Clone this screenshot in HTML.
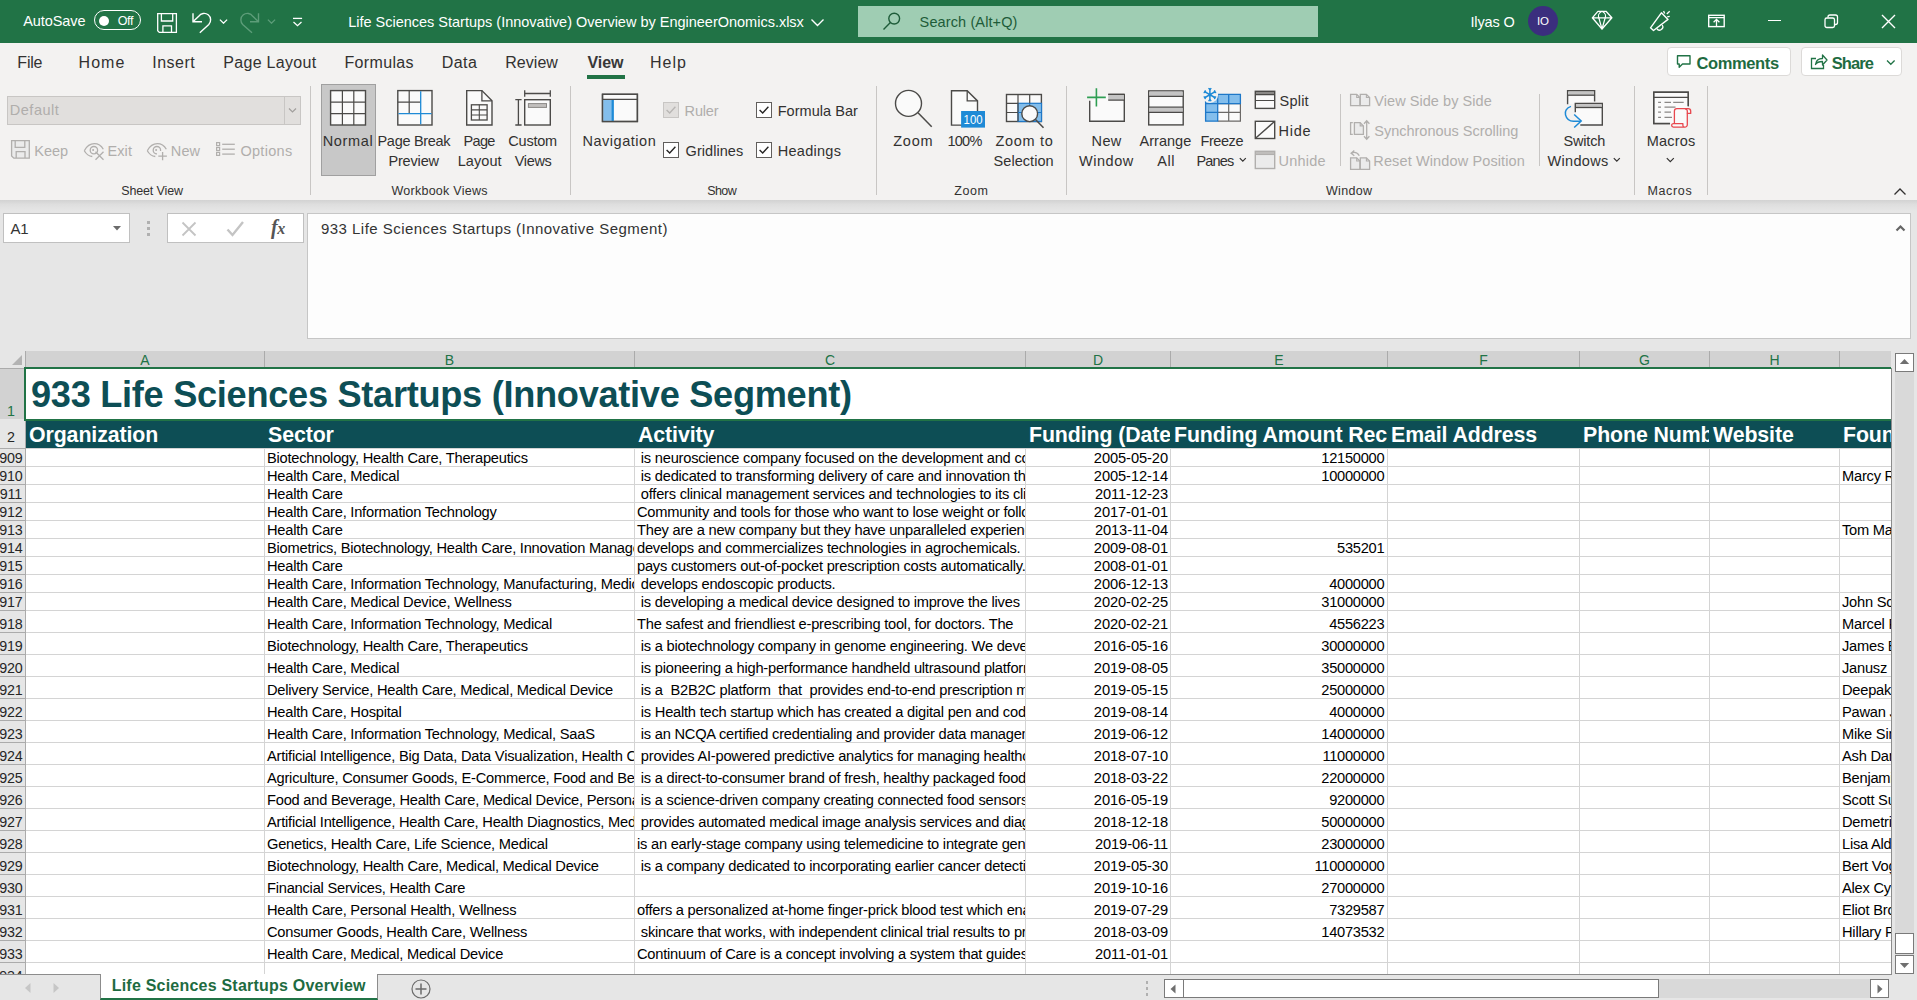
<!DOCTYPE html>
<html><head><meta charset="utf-8"><title>Excel</title>
<style>
html,body{margin:0;padding:0;}
body{width:1917px;height:1000px;overflow:hidden;position:relative;background:#e6e6e6;font-family:"Liberation Sans", sans-serif;}
.b{position:absolute;box-sizing:border-box;}
.t{position:absolute;white-space:pre;font-family:"Liberation Sans", sans-serif;}
.c{position:absolute;white-space:pre;overflow:hidden;font-size:14.67px;line-height:18px;color:#000;font-family:"Liberation Sans", sans-serif;box-sizing:border-box;}
</style></head><body>
<div class="b" style="left:0px;top:0px;width:1917px;height:43px;background:#217346;"></div>
<div class="b" style="left:0px;top:43px;width:1917px;height:157px;background:#f3f2f1;"></div>
<div class="b" style="left:0px;top:200px;width:1917px;height:11px;background:linear-gradient(#d2d2d2,#dedede 40%,#e6e6e6);"></div>
<div class="t" style="left:23.30px;top:10.98px;font-size:14.5px;line-height:20px;color:#ffffff;letter-spacing:-0.102px;">AutoSave</div>
<div class="b" style="left:94px;top:10px;width:47px;height:20px;border:1.3px solid #fff;border-radius:10px;"></div>
<div class="b" style="left:99px;top:15.5px;width:10px;height:10px;background:#fff;border-radius:5px;"></div>
<div class="t" style="left:117.70px;top:11.07px;font-size:12.5px;line-height:20px;color:#ffffff;letter-spacing:-0.335px;">Off</div>
<svg class="b" style="left:150px;top:5px;" width="40" height="35" viewBox="0 0 40 35" fill="none"><path d="M7.700 8.700h18.700v18.700h-17.100l-1.600-1.600z" stroke="#fff" stroke-width="1.300"/><path d="M11.400 8.700v7.300h11.300v-7.300M12.900 27.400v-6.600h8.600v6.600" stroke="#fff" stroke-width="1.300"/></svg>
<svg class="b" style="left:185px;top:5px;" width="40" height="35" viewBox="0 0 40 35" fill="none"><path d="M8 8.300v8.400h9" stroke="#fff" stroke-width="1.400"/><path d="M8.200 16.500L13.700 11.300A6.500 6.500 0 1 1 23.800 19.400L14.800 27.700" stroke="#fff" stroke-width="1.400"/></svg>
<svg class="b" style="left:219px;top:17px;" width="9" height="7" viewBox="0 0 9 7" fill="none"><path d="M.900 2.600l3.600 3.600l3.600-3.600" stroke="#fff" stroke-width="1.300"/></svg>
<svg class="b" style="left:235px;top:5px;" width="40" height="35" viewBox="0 0 40 35" fill="none"><path d="M23.500 8.300v8.400h-8.500" stroke="#5d9d79" stroke-width="1.400"/><path d="M23.300 16.500L17.800 11.300A6.500 6.500 0 1 0 7.700 19.400L17 27.700" stroke="#5d9d79" stroke-width="1.400"/></svg>
<svg class="b" style="left:267px;top:17px;" width="9" height="7" viewBox="0 0 9 7" fill="none"><path d="M.900 2.600l3.600 3.600l3.600-3.600" stroke="#5d9d79" stroke-width="1.300"/></svg>
<svg class="b" style="left:291px;top:16px;" width="13" height="11" viewBox="0 0 13 11" fill="none"><path d="M2 2.400h9.100" stroke="#fff" stroke-width="1.300"/><path d="M2.500 6.100l4 3.600l4-3.600" stroke="#fff" stroke-width="1.300"/></svg>
<div class="t" style="left:348.20px;top:11.98px;font-size:14.5px;line-height:20px;color:#ffffff;letter-spacing:-0.007px;">Life Sciences Startups (Innovative) Overview by EngineerOnomics.xlsx</div>
<svg class="b" style="left:810px;top:17.5px;" width="15" height="10" viewBox="0 0 15 10" fill="none"><path d="M1.5 1.5l6 6l6-6" stroke="#fff" stroke-width="1.4"/></svg>
<div class="b" style="left:858px;top:6px;width:460px;height:31px;background:#9fcdb3;"></div>
<svg class="b" style="left:882px;top:11px;" width="20" height="20" viewBox="0 0 20 20" fill="none"><circle cx="12.2" cy="7.6" r="5.4" stroke="#1e5c39" stroke-width="1.4"/><path d="M8.4 11.6L1.5 18.4" stroke="#1e5c39" stroke-width="1.4"/></svg>
<div class="t" style="left:919.60px;top:11.98px;font-size:14.5px;line-height:20px;color:#1e5c39;letter-spacing:0.118px;">Search (Alt+Q)</div>
<div class="t" style="left:1470.40px;top:11.98px;font-size:14.5px;line-height:20px;color:#ffffff;letter-spacing:-0.107px;">Ilyas O</div>
<div class="b" style="left:1528px;top:6px;width:30px;height:30px;background:#3b2e7e;border-radius:15px;"></div>
<div class="t" style="left:1528.00px;top:11.02px;font-size:11.5px;line-height:20px;color:#ffffff;width:30px;text-align:center;">IO</div>
<svg class="b" style="left:1580px;top:4px;" width="60" height="34" viewBox="0 0 60 34" fill="none"><path d="M17.900 7.300h8.100l5.900 6.500l-9.900 11.200l-9.700-11.200z M12.300 13.800h19.600" stroke="#fff" stroke-width="1.300" stroke-linejoin="round"/><path d="M22 7.300C18.500 9 18 12 18.800 13.800L22 25M22 7.300C25.500 9 26 12 25.200 13.800L22 25" stroke="#fff" stroke-width="1.200"/></svg>
<svg class="b" style="left:1640px;top:4px;" width="40" height="34" viewBox="0 0 40 34" fill="none"><path d="M10.500 23.800l10.900-15l6.600 6.600l-14.500 11.100z" stroke="#fff" stroke-width="1.400" stroke-linejoin="round"/><path d="M16.800 24.600a3 3 0 0 0 5.400-3.600" stroke="#fff" stroke-width="1.300"/><path d="M23.600 7l1 2.500M26.800 10l2.900-2.700M27.200 12.900l2.500-.500" stroke="#fff" stroke-width="1.300"/></svg>
<svg class="b" style="left:1700px;top:4px;" width="34" height="34" viewBox="0 0 34 34" fill="none"><rect x="8.700" y="11.300" width="15.500" height="11.300" stroke="#fff" stroke-width="1.400"/><path d="M8.700 13.600h15.500M16.500 22.500v-7M13.600 18.300l2.900-2.900l2.900 2.900" stroke="#fff" stroke-width="1.300"/></svg>
<div class="b" style="left:1767.5px;top:20px;width:13px;height:1.2px;background:#fff;"></div>
<svg class="b" style="left:1824px;top:14px;" width="15" height="15" viewBox="0 0 15 15" fill="none"><rect x="1" y="4" width="9.500" height="9.500" rx="1.800" stroke="#fff" stroke-width="1.300"/><path d="M4 3.500v-.500a2 2 0 0 1 2-2h5.500a2 2 0 0 1 2 2v5.500a2 2 0 0 1-2 2h-.500" stroke="#fff" stroke-width="1.300"/></svg>
<svg class="b" style="left:1881px;top:14px;" width="15" height="15" viewBox="0 0 15 15" fill="none"><path d="M1 1l13 13M14 1l-13 13" stroke="#fff" stroke-width="1.400"/></svg>
<div class="t" style="left:17.30px;top:53.46px;font-size:16px;line-height:20px;color:#323130;letter-spacing:-0.194px;">File</div>
<div class="t" style="left:78.60px;top:53.46px;font-size:16px;line-height:20px;color:#323130;letter-spacing:1.006px;">Home</div>
<div class="t" style="left:152.20px;top:53.46px;font-size:16px;line-height:20px;color:#323130;letter-spacing:0.506px;">Insert</div>
<div class="t" style="left:223.30px;top:53.46px;font-size:16px;line-height:20px;color:#323130;letter-spacing:0.299px;">Page Layout</div>
<div class="t" style="left:344.50px;top:53.46px;font-size:16px;line-height:20px;color:#323130;letter-spacing:0.346px;">Formulas</div>
<div class="t" style="left:441.70px;top:53.46px;font-size:16px;line-height:20px;color:#323130;letter-spacing:0.467px;">Data</div>
<div class="t" style="left:505.30px;top:53.46px;font-size:16px;line-height:20px;color:#323130;letter-spacing:0.019px;">Review</div>
<div class="t" style="left:650.00px;top:53.46px;font-size:16px;line-height:20px;color:#323130;letter-spacing:0.997px;">Help</div>
<div class="t" style="left:587.40px;top:53.46px;font-size:16px;line-height:20px;color:#383838;font-weight:bold;letter-spacing:-0.042px;">View</div>
<div class="b" style="left:587px;top:75px;width:38px;height:3.7px;background:#217346;"></div>
<div class="b" style="left:1667px;top:47px;width:124px;height:29px;background:#fff;border:1px solid #dcdad8;border-radius:4px;"></div>
<svg class="b" style="left:1676px;top:54px;" width="17" height="16" viewBox="0 0 17 16" fill="none"><path d="M1.500 1.700h12.500v8.300h-7.500l-3.300 3.300v-3.300h-1.700z" stroke="#217346" stroke-width="1.400" stroke-linejoin="round"/></svg>
<div class="t" style="left:1696.40px;top:52.68px;font-size:16.5px;line-height:20px;color:#1e6b41;font-weight:bold;letter-spacing:-0.370px;">Comments</div>
<div class="b" style="left:1801px;top:47px;width:101px;height:29px;background:#fff;border:1px solid #dcdad8;border-radius:4px;"></div>
<svg class="b" style="left:1810px;top:53px;" width="18" height="17" viewBox="0 0 18 17" fill="none"><path d="M6 5.500h-4.500v10h12v-3.500" stroke="#217346" stroke-width="1.300"/><path d="M5.500 11.500c.500-4 3.500-6 7-6v-3.500l4.500 5l-4.500 5v-3.500c-3 0-5.500 .500-7 3z" stroke="#217346" stroke-width="1.300" stroke-linejoin="round"/></svg>
<div class="t" style="left:1831.70px;top:52.68px;font-size:16.5px;line-height:20px;color:#1e6b41;font-weight:bold;letter-spacing:-0.920px;">Share</div>
<svg class="b" style="left:1886px;top:59px;" width="10" height="7" viewBox="0 0 10 7" fill="none"><path d="M1 1.500l3.800 3.800l3.800-3.800" stroke="#217346" stroke-width="1.300"/></svg>
<div class="b" style="left:7px;top:96px;width:294px;height:29px;background:#e1dfdd;border:1px solid #c8c6c4;"></div>
<div class="b" style="left:284px;top:96px;width:1px;height:29px;background:#c8c6c4;"></div>
<svg class="b" style="left:288px;top:107px;" width="9" height="7" viewBox="0 0 9 7" fill="none"><path d="M1 1.500l3.500 3.500l3.500-3.500" stroke="#a19f9d" stroke-width="1.200"/></svg>
<div class="t" style="left:9.80px;top:99.98px;font-size:14.5px;line-height:20px;color:#b0aeac;letter-spacing:0.514px;">Default</div>
<div class="t" style="left:34.30px;top:140.98px;font-size:14.5px;line-height:20px;color:#b0aeac;letter-spacing:0.000px;">Keep</div>
<div class="t" style="left:107.40px;top:140.98px;font-size:14.5px;line-height:20px;color:#b0aeac;letter-spacing:0.119px;">Exit</div>
<div class="t" style="left:170.80px;top:140.98px;font-size:14.5px;line-height:20px;color:#b0aeac;letter-spacing:0.132px;">New</div>
<div class="t" style="left:240.40px;top:140.98px;font-size:14.5px;line-height:20px;color:#b0aeac;letter-spacing:0.296px;">Options</div>
<div class="t" style="left:121.20px;top:180.67px;font-size:12.5px;line-height:20px;color:#323130;letter-spacing:-0.131px;">Sheet View</div>
<div class="b" style="left:310px;top:86px;width:1px;height:109px;background:#c8c6c4;"></div>
<div class="b" style="left:321px;top:84px;width:55px;height:92px;background:#c8c8c8;border:1px solid #a0a0a0;"></div>
<div class="t" style="left:322.70px;top:130.98px;font-size:14.5px;line-height:20px;color:#323130;letter-spacing:0.659px;">Normal</div>
<div class="t" style="left:377.50px;top:130.98px;font-size:14.5px;line-height:20px;color:#323130;letter-spacing:-0.302px;">Page Break</div>
<div class="t" style="left:388.40px;top:150.98px;font-size:14.5px;line-height:20px;color:#323130;letter-spacing:-0.150px;">Preview</div>
<div class="t" style="left:463.50px;top:130.98px;font-size:14.5px;line-height:20px;color:#323130;letter-spacing:-0.667px;">Page</div>
<div class="t" style="left:457.70px;top:150.98px;font-size:14.5px;line-height:20px;color:#323130;letter-spacing:0.079px;">Layout</div>
<div class="t" style="left:508.30px;top:130.98px;font-size:14.5px;line-height:20px;color:#323130;letter-spacing:-0.216px;">Custom</div>
<div class="t" style="left:514.80px;top:150.98px;font-size:14.5px;line-height:20px;color:#323130;letter-spacing:-0.342px;">Views</div>
<div class="t" style="left:391.40px;top:180.67px;font-size:12.5px;line-height:20px;color:#323130;letter-spacing:0.271px;">Workbook Views</div>
<div class="b" style="left:570px;top:86px;width:1px;height:109px;background:#c8c6c4;"></div>
<div class="t" style="left:582.50px;top:130.98px;font-size:14.5px;line-height:20px;color:#323130;letter-spacing:0.528px;">Navigation</div>
<div class="t" style="left:684.60px;top:100.98px;font-size:14.5px;line-height:20px;color:#b0aeac;letter-spacing:-0.180px;">Ruler</div>
<div class="t" style="left:685.60px;top:140.98px;font-size:14.5px;line-height:20px;color:#323130;letter-spacing:0.042px;">Gridlines</div>
<div class="t" style="left:777.70px;top:100.98px;font-size:14.5px;line-height:20px;color:#323130;letter-spacing:0.036px;">Formula Bar</div>
<div class="t" style="left:777.70px;top:140.98px;font-size:14.5px;line-height:20px;color:#323130;letter-spacing:0.284px;">Headings</div>
<div class="t" style="left:707.20px;top:180.67px;font-size:12.5px;line-height:20px;color:#323130;letter-spacing:-0.580px;">Show</div>
<div class="b" style="left:876px;top:86px;width:1px;height:109px;background:#c8c6c4;"></div>
<div class="t" style="left:893.30px;top:130.98px;font-size:14.5px;line-height:20px;color:#323130;letter-spacing:0.705px;">Zoom</div>
<div class="t" style="left:947.40px;top:130.98px;font-size:14.5px;line-height:20px;color:#323130;letter-spacing:-0.731px;">100%</div>
<div class="t" style="left:995.50px;top:130.98px;font-size:14.5px;line-height:20px;color:#323130;letter-spacing:0.680px;">Zoom to</div>
<div class="t" style="left:993.60px;top:150.98px;font-size:14.5px;line-height:20px;color:#323130;letter-spacing:0.039px;">Selection</div>
<div class="t" style="left:954.30px;top:180.67px;font-size:12.5px;line-height:20px;color:#323130;letter-spacing:0.554px;">Zoom</div>
<div class="b" style="left:1066px;top:86px;width:1px;height:109px;background:#c8c6c4;"></div>
<div class="t" style="left:1091.60px;top:130.98px;font-size:14.5px;line-height:20px;color:#323130;letter-spacing:0.332px;">New</div>
<div class="t" style="left:1079.00px;top:150.98px;font-size:14.5px;line-height:20px;color:#323130;letter-spacing:0.540px;">Window</div>
<div class="t" style="left:1139.60px;top:130.98px;font-size:14.5px;line-height:20px;color:#323130;letter-spacing:0.013px;">Arrange</div>
<div class="t" style="left:1157.30px;top:150.98px;font-size:14.5px;line-height:20px;color:#323130;letter-spacing:0.504px;">All</div>
<div class="t" style="left:1200.60px;top:130.98px;font-size:14.5px;line-height:20px;color:#323130;letter-spacing:-0.453px;">Freeze</div>
<div class="t" style="left:1196.50px;top:150.98px;font-size:14.5px;line-height:20px;color:#323130;letter-spacing:-0.841px;">Panes</div>
<svg class="b" style="left:1239px;top:157px;" width="8" height="6" viewBox="0 0 8 6" fill="none"><path d="M.800 1.200l3 3l3-3" stroke="#323130" stroke-width="1.200"/></svg>
<div class="t" style="left:1279.60px;top:90.98px;font-size:14.5px;line-height:20px;color:#323130;letter-spacing:0.205px;">Split</div>
<div class="t" style="left:1278.60px;top:120.98px;font-size:14.5px;line-height:20px;color:#323130;letter-spacing:0.681px;">Hide</div>
<div class="t" style="left:1278.60px;top:150.98px;font-size:14.5px;line-height:20px;color:#b0aeac;letter-spacing:0.203px;">Unhide</div>
<div class="b" style="left:1340px;top:94px;width:1px;height:72px;background:#c8c6c4;"></div>
<div class="t" style="left:1374.30px;top:90.98px;font-size:14.5px;line-height:20px;color:#b0aeac;letter-spacing:0.053px;">View Side by Side</div>
<div class="t" style="left:1374.30px;top:120.98px;font-size:14.5px;line-height:20px;color:#b0aeac;letter-spacing:-0.010px;">Synchronous Scrolling</div>
<div class="t" style="left:1373.30px;top:150.98px;font-size:14.5px;line-height:20px;color:#b0aeac;letter-spacing:0.124px;">Reset Window Position</div>
<div class="b" style="left:1539px;top:94px;width:1px;height:72px;background:#c8c6c4;"></div>
<div class="t" style="left:1563.50px;top:130.98px;font-size:14.5px;line-height:20px;color:#323130;letter-spacing:-0.169px;">Switch</div>
<div class="t" style="left:1547.50px;top:150.98px;font-size:14.5px;line-height:20px;color:#323130;letter-spacing:0.321px;">Windows</div>
<svg class="b" style="left:1613px;top:157px;" width="8" height="6" viewBox="0 0 8 6" fill="none"><path d="M.800 1.200l3 3l3-3" stroke="#323130" stroke-width="1.200"/></svg>
<div class="t" style="left:1326.00px;top:180.67px;font-size:12.5px;line-height:20px;color:#323130;letter-spacing:0.314px;">Window</div>
<div class="b" style="left:1634px;top:86px;width:1px;height:109px;background:#c8c6c4;"></div>
<div class="t" style="left:1646.80px;top:130.98px;font-size:14.5px;line-height:20px;color:#323130;letter-spacing:0.183px;">Macros</div>
<svg class="b" style="left:1666px;top:157px;" width="9" height="6" viewBox="0 0 9 6" fill="none"><path d="M.800 1.200l3.500 3.500l3.500-3.500" stroke="#323130" stroke-width="1.200"/></svg>
<div class="t" style="left:1647.40px;top:180.67px;font-size:12.5px;line-height:20px;color:#323130;letter-spacing:0.674px;">Macros</div>
<div class="b" style="left:1707px;top:86px;width:1px;height:109px;background:#c8c6c4;"></div>
<svg class="b" style="left:1893px;top:187px;" width="14" height="9" viewBox="0 0 14 9" fill="none"><path d="M1.500 7.500l5.500-5.500l5.500 5.500" stroke="#323130" stroke-width="1.300"/></svg>
<svg class="b" style="left:0;top:0;" width="1917" height="210" viewBox="0 0 1917 210" fill="none"><path d="M11.600 140.600h17.700v17.600h-15.500l-2.200-2.200z" stroke="#b1afad" stroke-width="1.3" fill="#ebebeb" /><path d="M15.200 140.800v6.500h9.600v-6.500M16.200 158v-6.400h8.800v6.400" stroke="#b1afad" stroke-width="1.3" fill="none" /><path d="M84.3 150.7c3-5.500 7-7 10-7s7 2 9 5.500" stroke="#b1afad" stroke-width="1.3" fill="none" /><path d="M84.3 150.7c2 3.500 5 5.500 8 5.800" stroke="#b1afad" stroke-width="1.3" fill="none" /><circle cx="93.89999999999999" cy="150.2" r="3.700" stroke="#b1afad" stroke-width="1.300" fill="none"/><circle cx="93.1" cy="149.89999999999998" r="1" fill="#b1afad"/><path d="M95.500 151.800l8 8M103.500 151.800l-8 8" stroke="#b1afad" stroke-width="1.3" fill="none" /><path d="M147.29999999999998 150.7c3-5.500 7-7 10-7s7 2 9 5.500" stroke="#b1afad" stroke-width="1.3" fill="none" /><path d="M147.29999999999998 150.7c2 3.500 5 5.500 8 5.800" stroke="#b1afad" stroke-width="1.3" fill="none" /><circle cx="156.9" cy="150.2" r="3.700" stroke="#b1afad" stroke-width="1.300" fill="none"/><circle cx="156.1" cy="149.89999999999998" r="1" fill="#b1afad"/><rect x="157" y="151" width="11" height="10" fill="#f3f2f1"/><path d="M162.600 152v8.300M158.300 156.200h8.600" stroke="#b1afad" stroke-width="1.3" fill="none" /><rect x="216.6" y="142.6" width="3.00" height="3.00" stroke="#b1afad" stroke-width="1.2" fill="none" /><path d="M222.200 144.29999999999998h12.600" stroke="#b1afad" stroke-width="1.3" fill="none" /><rect x="216.6" y="147.5" width="3.00" height="3.00" stroke="#b1afad" stroke-width="1.2" fill="none" /><path d="M222.200 149.2h12.600" stroke="#b1afad" stroke-width="1.3" fill="none" /><rect x="216.6" y="152.4" width="3.00" height="3.00" stroke="#b1afad" stroke-width="1.2" fill="none" /><path d="M222.200 154.1h12.600" stroke="#b1afad" stroke-width="1.3" fill="none" /><rect x="330.6" y="90.6" width="34.90" height="34.40" stroke="#4b4a48" stroke-width="1.4" fill="#fafafa" /><path d="M342.400 90.600v34.400M353.800 90.600v34.400M330.600 102.200h34.900M330.600 113.700h34.900" stroke="#4b4a48" stroke-width="1.2" fill="none" /><rect x="397.8" y="90.6" width="34.20" height="34.40" stroke="#4b4a48" stroke-width="1.4" fill="#fafafa" /><path d="M409.200 90.600v23M397.800 102.200h23" stroke="#4b4a48" stroke-width="1.2" fill="none" /><path d="M420.700 91.300v33M398.500 113.700h33" stroke="#1e8ad6" stroke-width="1.3" fill="none" /><path d="M466.700 90.600h15.200l10.100 10.200v24.200h-25.300z" stroke="#4b4a48" stroke-width="1.4" fill="#fafafa" /><path d="M481.900 90.600v10.200h10.100" stroke="#4b4a48" stroke-width="1.3" fill="none" /><rect x="471.4" y="104.8" width="15.70" height="15.20" stroke="#4b4a48" stroke-width="1.3" fill="none" /><path d="M479.300 104.800v15.200M471.400 109.900h15.700M471.400 115h15.700" stroke="#4b4a48" stroke-width="1.1" fill="none" /><rect x="524.7" y="99.7" width="25.60" height="25.30" stroke="#4b4a48" stroke-width="1.4" fill="#fafafa" /><rect x="528.4" y="103.6" width="18.10" height="3.80" stroke="#8a8886" stroke-width="1" fill="#c2c0be" /><path d="M524.700 93.500h25.600M524.700 90.300v6.500M550.300 90.300v6.500" stroke="#4b4a48" stroke-width="1.3" fill="none" /><path d="M518.400 99.700v25.300M515.300 99.700h6.300M515.300 125h6.300" stroke="#4b4a48" stroke-width="1.3" fill="none" /><rect x="602.5" y="94.3" width="34.90" height="27.20" stroke="#4b4a48" stroke-width="1.4" fill="#fafafa" /><rect x="603.200" y="99.300" width="10.500" height="21.600" fill="#83beec"/><rect x="611.600" y="99.300" width="2.200" height="21.600" fill="#1e8ad6"/><path d="M602.500 99.300h34.900" stroke="#4b4a48" stroke-width="1.3" fill="none" /><rect x="602.5" y="94.3" width="34.90" height="27.20" stroke="#4b4a48" stroke-width="1.4" fill="none" /><rect x="663.5" y="102.5" width="15.00" height="15.00" stroke="#c8c6c4" stroke-width="1" fill="#e1dfdd" /><path d="M666.6 109.9l3.100 3l5.700-6.100" stroke="#b8b6b4" stroke-width="1.4" fill="none" /><rect x="663.5" y="142.5" width="15.00" height="15.00" stroke="#605e5c" stroke-width="1" fill="#ffffff" /><path d="M666.6 149.9l3.100 3l5.700-6.100" stroke="#252423" stroke-width="1.4" fill="none" /><rect x="756.5" y="102.5" width="15.00" height="15.00" stroke="#605e5c" stroke-width="1" fill="#ffffff" /><path d="M759.6 109.9l3.100 3l5.700-6.100" stroke="#252423" stroke-width="1.4" fill="none" /><rect x="756.5" y="142.5" width="15.00" height="15.00" stroke="#605e5c" stroke-width="1" fill="#ffffff" /><path d="M759.6 149.9l3.100 3l5.700-6.100" stroke="#252423" stroke-width="1.4" fill="none" /><circle cx="908.500" cy="103.400" r="13" stroke="#4b4a48" stroke-width="1.400" fill="#fafafa"/><path d="M918 112.700l13.700 14" stroke="#4b4a48" stroke-width="1.5" fill="none" /><path d="M951.500 90.800h15.700l10.300 10.100v24.200h-26z" stroke="#4b4a48" stroke-width="1.4" fill="#fafafa" /><path d="M967.200 90.800v10.100h10.300" stroke="#4b4a48" stroke-width="1.3" fill="none" /><rect x="961.100" y="111" width="23.900" height="16.600" fill="#1e8ad6"/><text x="973.100" y="124.300" font-family="Liberation Sans" font-size="12.500" fill="#fff" text-anchor="middle" textLength="19" lengthAdjust="spacingAndGlyphs">100</text><rect x="1006.5" y="94.5" width="34.90" height="27.00" stroke="#4b4a48" stroke-width="1.4" fill="#fafafa" /><rect x="1018" y="103.300" width="23.500" height="18.200" fill="#83beec" stroke="#1e78c8" stroke-width="1.200"/><path d="M1018 94.500v27M1029.700 94.500v9M1006.500 103.300h11.500M1006.500 112.500h11.500" stroke="#4b4a48" stroke-width="1.2" fill="none" /><path d="M1029.700 103.300v18M1018 112.500h23.500" stroke="#1e78c8" stroke-width="1" fill="none" /><circle cx="1029.700" cy="113.700" r="7.900" stroke="#4b4a48" stroke-width="1.400" fill="#fafafa"/><path d="M1035.500 119.500l8 8.200" stroke="#4b4a48" stroke-width="1.5" fill="none" /><path d="M1089.700 100.700v20.500h34.600v-26.800h-16" stroke="#4b4a48" stroke-width="1.4" fill="#fafafa" /><rect x="1108.200" y="95" width="15.500" height="5" fill="#c4c4c4"/><path d="M1108.200 94.400h16.100M1108.200 100.200h16.100" stroke="#4b4a48" stroke-width="1.3" fill="none" /><path d="M1096.400 88.200v18.200M1087.100 97.400h18.700" stroke="#2f9e53" stroke-width="1.6" fill="none" /><rect x="1148.7" y="90.9" width="34.50" height="34.00" stroke="#4b4a48" stroke-width="1.4" fill="#fafafa" /><rect x="1149.400" y="91.600" width="33.200" height="4.600" fill="#c4c4c4"/><rect x="1149.400" y="107.800" width="33.200" height="4.600" fill="#c4c4c4"/><path d="M1148.700 96.300h34.500M1148.700 107.200h34.500M1148.700 112.400h34.500" stroke="#4b4a48" stroke-width="1.3" fill="none" /><rect x="1205.600" y="94.300" width="34.800" height="26.900" fill="#fafafa"/><rect x="1205.600" y="94.300" width="34.800" height="9.300" fill="#83beec"/><rect x="1205.600" y="94.300" width="12.100" height="26.900" fill="#83beec"/><path d="M1217.700 103.600h22.700v17.600h-22.700M1228.700 103.600v17.600M1217.700 112.400h22.700" stroke="#6b6967" stroke-width="1.2" fill="none" /><path d="M1205.600 94.300h34.800v9.300h-22.700v17.600h-12.100zM1217.700 94.300v9.300M1228.700 94.300v9.300M1205.600 103.600h12.100M1205.600 112.400h12.100" stroke="#1e78c8" stroke-width="1.3" fill="none" /><circle cx="1209.900" cy="94.700" r="8.200" fill="#f3f2f1"/><path d="M1209.90 88.10L1209.90 101.30M1215.62 91.40L1204.18 98.00M1215.62 98.00L1204.18 91.40" stroke="#1e8ad6" stroke-width="1.5" fill="none" /><path d="M1209.90 99.50l1.41 1.69M1209.90 99.50l-1.41 1.69M1205.74 97.10l-0.75 2.07M1205.74 97.10l-2.17 -0.38M1205.74 92.30l-2.17 0.38M1205.74 92.30l-0.75 -2.07M1209.90 89.90l-1.41 -1.69M1209.90 89.90l1.41 -1.69M1214.06 92.30l0.75 -2.07M1214.06 92.30l2.17 0.38M1214.06 97.10l2.17 -0.38M1214.06 97.10l0.75 2.07" stroke="#1e8ad6" stroke-width="1.2" fill="none" /><rect x="1255.3" y="91.3" width="19.40" height="17.10" stroke="#4b4a48" stroke-width="1.4" fill="#fafafa" /><rect x="1256" y="92" width="18" height="2.400" fill="#8a8886"/><path d="M1255.300 94.700h19.400M1255.300 100.500h19.400" stroke="#4b4a48" stroke-width="1.2" fill="none" /><rect x="1255.3" y="121.3" width="19.40" height="17.20" stroke="#4b4a48" stroke-width="1.4" fill="#fafafa" /><path d="M1255.800 138l18.400-16.200" stroke="#4b4a48" stroke-width="1.4" fill="none" /><rect x="1255.3" y="151.3" width="19.40" height="17.20" stroke="#b1afad" stroke-width="1.4" fill="#ebebeb" /><rect x="1256" y="152" width="18" height="2.200" fill="#c0bebc"/><path d="M1255.300 154.500h19.400" stroke="#b1afad" stroke-width="1.1" fill="none" /><path d="M1350.6 94.3h6.1000000000000005l3.2 3.2v8.100000000000001h-9.3z" stroke="#b1afad" stroke-width="1.3" fill="#ebebeb" /><path d="M1356.6999999999998 94.3v3.2h3.2" stroke="#b1afad" stroke-width="1.1" fill="none" /><path d="M1360.3 94.3h6.1000000000000005l3.2 3.2v8.100000000000001h-9.3z" stroke="#b1afad" stroke-width="1.3" fill="#ebebeb" /><path d="M1366.3999999999999 94.3v3.2h3.2" stroke="#b1afad" stroke-width="1.1" fill="none" /><path d="M1352.800 122.700h-2.200v11.700h2.200" stroke="#b1afad" stroke-width="1.3" fill="none" /><path d="M1354.4 122.7h5.8l3.2 3.2v8.5h-9z" stroke="#b1afad" stroke-width="1.3" fill="#ebebeb" /><path d="M1360.2 122.7v3.2h3.2" stroke="#b1afad" stroke-width="1.1" fill="none" /><path d="M1366.700 121v18M1364 123.800l2.700-3l2.700 3M1364 136.300l2.700 3l2.700-3" stroke="#b1afad" stroke-width="1.3" fill="none" /><path d="M1350.6 157.8h6.1000000000000005l3.2 3.2v8.3h-9.3z" stroke="#b1afad" stroke-width="1.3" fill="#ebebeb" /><path d="M1356.6999999999998 157.8v3.2h3.2" stroke="#b1afad" stroke-width="1.1" fill="none" /><path d="M1360.3 157.8h6.1000000000000005l3.2 3.2v8.3h-9.3z" stroke="#b1afad" stroke-width="1.3" fill="#ebebeb" /><path d="M1366.3999999999999 157.8v3.2h3.2" stroke="#b1afad" stroke-width="1.1" fill="none" /><path d="M1351.300 153.200c3-1.500 6-1 8 2.500M1354.300 150.500l-3.200 2.700l3.200 2.600" stroke="#b1afad" stroke-width="1.3" fill="none" /><path d="M1567.600 104.300v-13.500h27v10.800" stroke="#4b4a48" stroke-width="1.4" fill="#fafafa" /><rect x="1568.300" y="91.500" width="25.600" height="3.400" fill="#c4c4c4"/><path d="M1567.600 95.200h27" stroke="#4b4a48" stroke-width="1.3" fill="none" /><path d="M1575.300 112.200v-8.700h27v21.500h-22" stroke="#4b4a48" stroke-width="1.4" fill="#fafafa" /><rect x="1576" y="104.200" width="25.600" height="3" fill="#c4c4c4"/><path d="M1575.300 107.500h27" stroke="#4b4a48" stroke-width="1.3" fill="none" /><path d="M1571 106.400c-4.500 1.200-6.500 5-5.500 8.500c1 4 4 6.300 8 6.300h7" stroke="#1e8ad6" stroke-width="1.5" fill="none" /><path d="M1574.200 114.500l7 6.500l-7 6.500" stroke="#1e8ad6" stroke-width="1.5" fill="none" /><path d="M1688.200 106.300v-14h-34.400v31.200h16.200" stroke="#4b4a48" stroke-width="1.4" fill="#fafafa" /><rect x="1654.500" y="93" width="33" height="30" fill="#fafafa"/><path d="M1688.200 106.300v-14h-34.400v31.200h16.200" stroke="#4b4a48" stroke-width="1.4" fill="none" /><path d="M1653.800 97.300h34.400" stroke="#4b4a48" stroke-width="1.3" fill="none" /><path d="M1658.100 102.4h2.900M1664.5 102.4H1671M1673.2 102.4H1683.7" stroke="#8a8886" stroke-width="1.3" fill="none" /><path d="M1658.100 107.2h2.900M1664.5 107.2H1675.5" stroke="#8a8886" stroke-width="1.3" fill="none" /><path d="M1658.100 112.2h2.900M1664.5 112.2H1671" stroke="#8a8886" stroke-width="1.3" fill="none" /><path d="M1658.100 117.3h2.900M1664.5 117.3H1672" stroke="#8a8886" stroke-width="1.3" fill="none" /><path d="M1674.400 123.500v-12.400a2.400 2.400 0 0 1 2.400-2.400h11.300a2.600 2.600 0 0 1 2.600 2.600v2.100h-3.400v11.300a2.400 2.400 0 0 1-2.400 2.400h-11.500a1.700 1.700 0 0 1 0-3.500h9.500v1.800a1.700 1.700 0 0 0 1.700 1.700" stroke="#e8474e" stroke-width="1.3" fill="#fafafa" stroke-linejoin="round"/><path d="M1687.300 113.400v-2.300a2.300 2.300 0 0 0-2.300-2.300" stroke="#e8474e" stroke-width="1.3" fill="none" /></svg>
<div class="b" style="left:3px;top:213px;width:127px;height:30px;background:#fff;border:1px solid #c0c0c0;"></div>
<div class="t" style="left:10.40px;top:218.80px;font-size:15px;line-height:20px;color:#333;letter-spacing:-0.205px;">A1</div>
<svg class="b" style="left:113px;top:226px;" width="9" height="5" viewBox="0 0 9 5" fill="none"><path d="M0 0h8l-4 4.500z" fill="#6b6b6b"/></svg>
<div class="b" style="left:147px;top:221px;width:3px;height:3px;background:#b0b0b0;"></div>
<div class="b" style="left:147px;top:227px;width:3px;height:3px;background:#b0b0b0;"></div>
<div class="b" style="left:147px;top:233px;width:3px;height:3px;background:#b0b0b0;"></div>
<div class="b" style="left:167px;top:213px;width:137px;height:30px;background:#fff;border:1px solid #c0c0c0;"></div>
<svg class="b" style="left:181px;top:221px;" width="16" height="16" viewBox="0 0 16 16" fill="none"><path d="M1.500 1.500l13 13M14.500 1.500l-13 13" stroke="#c4c4c4" stroke-width="1.800"/></svg>
<svg class="b" style="left:226px;top:220px;" width="19" height="17" viewBox="0 0 19 17" fill="none"><path d="M1.500 9.500l5 5.500l10.500-13" stroke="#c4c4c4" stroke-width="2.400"/></svg>
<div class="t" style="left:271px;top:216px;font-family:'Liberation Serif',serif;font-style:italic;font-weight:bold;font-size:20px;line-height:22px;color:#555;letter-spacing:-0.500px;">f<span style="font-size:16px;">x</span></div>
<div class="b" style="left:307px;top:213px;width:1604px;height:126px;background:#fdfdfd;border:1px solid #c6c6c6;"></div>
<div class="t" style="left:321.00px;top:218.80px;font-size:15px;line-height:20px;color:#333;letter-spacing:0.463px;">933 Life Sciences Startups (Innovative Segment)</div>
<svg class="b" style="left:1895px;top:224px;" width="11" height="8" viewBox="0 0 11 8" fill="none"><path d="M1.500 6.500l4-4l4 4" stroke="#666" stroke-width="2.200"/></svg>
<div class="b" style="left:26px;top:369px;width:1865px;height:606px;background:#fff;"></div>
<div class="b" style="left:26px;top:351px;width:1865px;height:16px;background:#d2d2d2;"></div>
<div class="b" style="left:25px;top:351px;width:1px;height:16px;background:#ababab;"></div>
<svg class="b" style="left:12px;top:354px;" width="11" height="11" viewBox="0 0 11 11" fill="none"><path d="M10 1v10h-10z" fill="#b3b3b3"/></svg>
<div class="t" style="left:26.00px;top:350.15px;font-size:14px;line-height:20px;color:#217346;width:238px;text-align:center;">A</div>
<div class="b" style="left:264px;top:351px;width:1px;height:16px;background:#ababab;"></div>
<div class="t" style="left:265.00px;top:350.15px;font-size:14px;line-height:20px;color:#217346;width:369px;text-align:center;">B</div>
<div class="b" style="left:634px;top:351px;width:1px;height:16px;background:#ababab;"></div>
<div class="t" style="left:635.00px;top:350.15px;font-size:14px;line-height:20px;color:#217346;width:390px;text-align:center;">C</div>
<div class="b" style="left:1025px;top:351px;width:1px;height:16px;background:#ababab;"></div>
<div class="t" style="left:1026.00px;top:350.15px;font-size:14px;line-height:20px;color:#217346;width:144px;text-align:center;">D</div>
<div class="b" style="left:1170px;top:351px;width:1px;height:16px;background:#ababab;"></div>
<div class="t" style="left:1171.00px;top:350.15px;font-size:14px;line-height:20px;color:#217346;width:216px;text-align:center;">E</div>
<div class="b" style="left:1387px;top:351px;width:1px;height:16px;background:#ababab;"></div>
<div class="t" style="left:1388.00px;top:350.15px;font-size:14px;line-height:20px;color:#217346;width:191px;text-align:center;">F</div>
<div class="b" style="left:1579px;top:351px;width:1px;height:16px;background:#ababab;"></div>
<div class="t" style="left:1580.00px;top:350.15px;font-size:14px;line-height:20px;color:#217346;width:129px;text-align:center;">G</div>
<div class="b" style="left:1709px;top:351px;width:1px;height:16px;background:#ababab;"></div>
<div class="t" style="left:1710.00px;top:350.15px;font-size:14px;line-height:20px;color:#217346;width:129px;text-align:center;">H</div>
<div class="b" style="left:1839px;top:351px;width:1px;height:16px;background:#ababab;"></div>
<div class="b" style="left:0px;top:368px;width:24px;height:1px;background:#ababab;"></div>
<div class="b" style="left:0px;top:369px;width:24px;height:50px;background:#d2d2d2;"></div>
<div class="b" style="left:25px;top:421px;width:1px;height:554px;background:#ababab;"></div>
<div class="b" style="left:26px;top:448px;width:1865px;height:1px;background:#d4d4d4;"></div>
<div class="b" style="left:0px;top:448px;width:25px;height:1px;background:#ababab;"></div>
<div class="b" style="left:26px;top:466px;width:1865px;height:1px;background:#d4d4d4;"></div>
<div class="b" style="left:0px;top:466px;width:25px;height:1px;background:#ababab;"></div>
<div class="b" style="left:26px;top:484px;width:1865px;height:1px;background:#d4d4d4;"></div>
<div class="b" style="left:0px;top:484px;width:25px;height:1px;background:#ababab;"></div>
<div class="b" style="left:26px;top:502px;width:1865px;height:1px;background:#d4d4d4;"></div>
<div class="b" style="left:0px;top:502px;width:25px;height:1px;background:#ababab;"></div>
<div class="b" style="left:26px;top:520px;width:1865px;height:1px;background:#d4d4d4;"></div>
<div class="b" style="left:0px;top:520px;width:25px;height:1px;background:#ababab;"></div>
<div class="b" style="left:26px;top:538px;width:1865px;height:1px;background:#d4d4d4;"></div>
<div class="b" style="left:0px;top:538px;width:25px;height:1px;background:#ababab;"></div>
<div class="b" style="left:26px;top:556px;width:1865px;height:1px;background:#d4d4d4;"></div>
<div class="b" style="left:0px;top:556px;width:25px;height:1px;background:#ababab;"></div>
<div class="b" style="left:26px;top:574px;width:1865px;height:1px;background:#d4d4d4;"></div>
<div class="b" style="left:0px;top:574px;width:25px;height:1px;background:#ababab;"></div>
<div class="b" style="left:26px;top:592px;width:1865px;height:1px;background:#d4d4d4;"></div>
<div class="b" style="left:0px;top:592px;width:25px;height:1px;background:#ababab;"></div>
<div class="b" style="left:26px;top:610px;width:1865px;height:1px;background:#d4d4d4;"></div>
<div class="b" style="left:0px;top:610px;width:25px;height:1px;background:#ababab;"></div>
<div class="b" style="left:26px;top:632px;width:1865px;height:1px;background:#d4d4d4;"></div>
<div class="b" style="left:0px;top:632px;width:25px;height:1px;background:#ababab;"></div>
<div class="b" style="left:26px;top:654px;width:1865px;height:1px;background:#d4d4d4;"></div>
<div class="b" style="left:0px;top:654px;width:25px;height:1px;background:#ababab;"></div>
<div class="b" style="left:26px;top:676px;width:1865px;height:1px;background:#d4d4d4;"></div>
<div class="b" style="left:0px;top:676px;width:25px;height:1px;background:#ababab;"></div>
<div class="b" style="left:26px;top:698px;width:1865px;height:1px;background:#d4d4d4;"></div>
<div class="b" style="left:0px;top:698px;width:25px;height:1px;background:#ababab;"></div>
<div class="b" style="left:26px;top:720px;width:1865px;height:1px;background:#d4d4d4;"></div>
<div class="b" style="left:0px;top:720px;width:25px;height:1px;background:#ababab;"></div>
<div class="b" style="left:26px;top:742px;width:1865px;height:1px;background:#d4d4d4;"></div>
<div class="b" style="left:0px;top:742px;width:25px;height:1px;background:#ababab;"></div>
<div class="b" style="left:26px;top:764px;width:1865px;height:1px;background:#d4d4d4;"></div>
<div class="b" style="left:0px;top:764px;width:25px;height:1px;background:#ababab;"></div>
<div class="b" style="left:26px;top:786px;width:1865px;height:1px;background:#d4d4d4;"></div>
<div class="b" style="left:0px;top:786px;width:25px;height:1px;background:#ababab;"></div>
<div class="b" style="left:26px;top:808px;width:1865px;height:1px;background:#d4d4d4;"></div>
<div class="b" style="left:0px;top:808px;width:25px;height:1px;background:#ababab;"></div>
<div class="b" style="left:26px;top:830px;width:1865px;height:1px;background:#d4d4d4;"></div>
<div class="b" style="left:0px;top:830px;width:25px;height:1px;background:#ababab;"></div>
<div class="b" style="left:26px;top:852px;width:1865px;height:1px;background:#d4d4d4;"></div>
<div class="b" style="left:0px;top:852px;width:25px;height:1px;background:#ababab;"></div>
<div class="b" style="left:26px;top:874px;width:1865px;height:1px;background:#d4d4d4;"></div>
<div class="b" style="left:0px;top:874px;width:25px;height:1px;background:#ababab;"></div>
<div class="b" style="left:26px;top:896px;width:1865px;height:1px;background:#d4d4d4;"></div>
<div class="b" style="left:0px;top:896px;width:25px;height:1px;background:#ababab;"></div>
<div class="b" style="left:26px;top:918px;width:1865px;height:1px;background:#d4d4d4;"></div>
<div class="b" style="left:0px;top:918px;width:25px;height:1px;background:#ababab;"></div>
<div class="b" style="left:26px;top:940px;width:1865px;height:1px;background:#d4d4d4;"></div>
<div class="b" style="left:0px;top:940px;width:25px;height:1px;background:#ababab;"></div>
<div class="b" style="left:26px;top:962px;width:1865px;height:1px;background:#d4d4d4;"></div>
<div class="b" style="left:0px;top:962px;width:25px;height:1px;background:#ababab;"></div>
<div class="b" style="left:26px;top:984px;width:1865px;height:1px;background:#d4d4d4;"></div>
<div class="b" style="left:0px;top:984px;width:25px;height:1px;background:#ababab;"></div>
<div class="b" style="left:264px;top:449px;width:1px;height:526px;background:#d4d4d4;"></div>
<div class="b" style="left:634px;top:449px;width:1px;height:526px;background:#d4d4d4;"></div>
<div class="b" style="left:1025px;top:449px;width:1px;height:526px;background:#d4d4d4;"></div>
<div class="b" style="left:1170px;top:449px;width:1px;height:526px;background:#d4d4d4;"></div>
<div class="b" style="left:1387px;top:449px;width:1px;height:526px;background:#d4d4d4;"></div>
<div class="b" style="left:1579px;top:449px;width:1px;height:526px;background:#d4d4d4;"></div>
<div class="b" style="left:1709px;top:449px;width:1px;height:526px;background:#d4d4d4;"></div>
<div class="b" style="left:1839px;top:449px;width:1px;height:526px;background:#d4d4d4;"></div>
<div class="b" style="left:26px;top:421px;width:1865px;height:27px;background:#0d4e55;"></div>
<div class="b" style="left:24px;top:367px;width:1867px;height:54px;border:2px solid #217346;border-right:none;"></div>
<div class="t" style="left:-7.60px;top:401.05px;font-size:14.3px;line-height:20px;color:#217346;width:37px;text-align:center;">1</div>
<div class="t" style="left:-7.60px;top:427.05px;font-size:14.3px;line-height:20px;color:#262626;width:37px;text-align:center;">2</div>
<div class="t" style="left:-7.60px;top:448.05px;font-size:14.3px;line-height:20px;color:#262626;letter-spacing:-0.100px;width:37px;text-align:center;">909</div>
<div class="t" style="left:-7.60px;top:466.05px;font-size:14.3px;line-height:20px;color:#262626;letter-spacing:-0.100px;width:37px;text-align:center;">910</div>
<div class="t" style="left:-7.60px;top:484.05px;font-size:14.3px;line-height:20px;color:#262626;letter-spacing:-0.100px;width:37px;text-align:center;">911</div>
<div class="t" style="left:-7.60px;top:502.05px;font-size:14.3px;line-height:20px;color:#262626;letter-spacing:-0.100px;width:37px;text-align:center;">912</div>
<div class="t" style="left:-7.60px;top:520.05px;font-size:14.3px;line-height:20px;color:#262626;letter-spacing:-0.100px;width:37px;text-align:center;">913</div>
<div class="t" style="left:-7.60px;top:538.05px;font-size:14.3px;line-height:20px;color:#262626;letter-spacing:-0.100px;width:37px;text-align:center;">914</div>
<div class="t" style="left:-7.60px;top:556.05px;font-size:14.3px;line-height:20px;color:#262626;letter-spacing:-0.100px;width:37px;text-align:center;">915</div>
<div class="t" style="left:-7.60px;top:574.05px;font-size:14.3px;line-height:20px;color:#262626;letter-spacing:-0.100px;width:37px;text-align:center;">916</div>
<div class="t" style="left:-7.60px;top:592.05px;font-size:14.3px;line-height:20px;color:#262626;letter-spacing:-0.100px;width:37px;text-align:center;">917</div>
<div class="t" style="left:-7.60px;top:614.05px;font-size:14.3px;line-height:20px;color:#262626;letter-spacing:-0.100px;width:37px;text-align:center;">918</div>
<div class="t" style="left:-7.60px;top:636.05px;font-size:14.3px;line-height:20px;color:#262626;letter-spacing:-0.100px;width:37px;text-align:center;">919</div>
<div class="t" style="left:-7.60px;top:658.05px;font-size:14.3px;line-height:20px;color:#262626;letter-spacing:-0.100px;width:37px;text-align:center;">920</div>
<div class="t" style="left:-7.60px;top:680.05px;font-size:14.3px;line-height:20px;color:#262626;letter-spacing:-0.100px;width:37px;text-align:center;">921</div>
<div class="t" style="left:-7.60px;top:702.05px;font-size:14.3px;line-height:20px;color:#262626;letter-spacing:-0.100px;width:37px;text-align:center;">922</div>
<div class="t" style="left:-7.60px;top:724.05px;font-size:14.3px;line-height:20px;color:#262626;letter-spacing:-0.100px;width:37px;text-align:center;">923</div>
<div class="t" style="left:-7.60px;top:746.05px;font-size:14.3px;line-height:20px;color:#262626;letter-spacing:-0.100px;width:37px;text-align:center;">924</div>
<div class="t" style="left:-7.60px;top:768.05px;font-size:14.3px;line-height:20px;color:#262626;letter-spacing:-0.100px;width:37px;text-align:center;">925</div>
<div class="t" style="left:-7.60px;top:790.05px;font-size:14.3px;line-height:20px;color:#262626;letter-spacing:-0.100px;width:37px;text-align:center;">926</div>
<div class="t" style="left:-7.60px;top:812.05px;font-size:14.3px;line-height:20px;color:#262626;letter-spacing:-0.100px;width:37px;text-align:center;">927</div>
<div class="t" style="left:-7.60px;top:834.05px;font-size:14.3px;line-height:20px;color:#262626;letter-spacing:-0.100px;width:37px;text-align:center;">928</div>
<div class="t" style="left:-7.60px;top:856.05px;font-size:14.3px;line-height:20px;color:#262626;letter-spacing:-0.100px;width:37px;text-align:center;">929</div>
<div class="t" style="left:-7.60px;top:878.05px;font-size:14.3px;line-height:20px;color:#262626;letter-spacing:-0.100px;width:37px;text-align:center;">930</div>
<div class="t" style="left:-7.60px;top:900.05px;font-size:14.3px;line-height:20px;color:#262626;letter-spacing:-0.100px;width:37px;text-align:center;">931</div>
<div class="t" style="left:-7.60px;top:922.05px;font-size:14.3px;line-height:20px;color:#262626;letter-spacing:-0.100px;width:37px;text-align:center;">932</div>
<div class="t" style="left:-7.60px;top:944.05px;font-size:14.3px;line-height:20px;color:#262626;letter-spacing:-0.100px;width:37px;text-align:center;">933</div>
<div class="t" style="left:-7.60px;top:966.05px;font-size:14.3px;line-height:20px;color:#262626;letter-spacing:-0.100px;width:37px;text-align:center;">934</div>
<div class="t" style="left:31.00px;top:385.46px;font-size:36.2px;line-height:20px;color:#0d4e55;font-weight:bold;letter-spacing:-0.294px;">933 Life Sciences Startups (Innovative Segment)</div>
<div class="c" style="left:26px;top:421px;width:238px;height:27px;"><div class="t" style="left:3px;top:3.61px;font-size:21.33px;line-height:20px;font-weight:bold;color:#fff;letter-spacing:-0.100px;">Organization</div></div>
<div class="c" style="left:265px;top:421px;width:369px;height:27px;"><div class="t" style="left:3px;top:3.61px;font-size:21.33px;line-height:20px;font-weight:bold;color:#fff;letter-spacing:-0.100px;">Sector</div></div>
<div class="c" style="left:635px;top:421px;width:390px;height:27px;"><div class="t" style="left:3px;top:3.61px;font-size:21.33px;line-height:20px;font-weight:bold;color:#fff;letter-spacing:-0.100px;">Activity</div></div>
<div class="c" style="left:1026px;top:421px;width:144px;height:27px;"><div class="t" style="left:3px;top:3.61px;font-size:21.33px;line-height:20px;font-weight:bold;color:#fff;letter-spacing:-0.100px;">Funding (Date</div></div>
<div class="c" style="left:1171px;top:421px;width:216px;height:27px;"><div class="t" style="left:3px;top:3.61px;font-size:21.33px;line-height:20px;font-weight:bold;color:#fff;letter-spacing:-0.100px;">Funding Amount Rec</div></div>
<div class="c" style="left:1388px;top:421px;width:191px;height:27px;"><div class="t" style="left:3px;top:3.61px;font-size:21.33px;line-height:20px;font-weight:bold;color:#fff;letter-spacing:-0.100px;">Email Address</div></div>
<div class="c" style="left:1580px;top:421px;width:129px;height:27px;"><div class="t" style="left:3px;top:3.61px;font-size:21.33px;line-height:20px;font-weight:bold;color:#fff;letter-spacing:-0.100px;">Phone Number</div></div>
<div class="c" style="left:1710px;top:421px;width:129px;height:27px;"><div class="t" style="left:3px;top:3.61px;font-size:21.33px;line-height:20px;font-weight:bold;color:#fff;letter-spacing:-0.100px;">Website</div></div>
<div class="c" style="left:1840px;top:421px;width:51px;height:27px;"><div class="t" style="left:3px;top:3.61px;font-size:21.33px;line-height:20px;font-weight:bold;color:#fff;letter-spacing:-0.100px;">Founders</div></div>
<div class="c" style="left:265px;top:449.42px;width:369px;height:18px;padding-left:2px;letter-spacing:-0.230px;">Biotechnology, Health Care, Therapeutics</div>
<div class="c" style="left:635px;top:449.42px;width:390px;height:18px;padding-left:2px;letter-spacing:-0.230px;"> is neuroscience company focused on the development and commercialization</div>
<div class="c" style="left:1026px;top:449.42px;width:144px;height:18px;padding-right:2px;text-align:right;letter-spacing:-0.08px;">2005-05-20</div>
<div class="c" style="left:1171px;top:449.42px;width:215.4000000000001px;height:18px;padding-right:2px;text-align:right;letter-spacing:-0.27px;">12150000</div>
<div class="c" style="left:265px;top:467.42px;width:369px;height:18px;padding-left:2px;letter-spacing:-0.230px;">Health Care, Medical</div>
<div class="c" style="left:635px;top:467.42px;width:390px;height:18px;padding-left:2px;letter-spacing:-0.230px;"> is dedicated to transforming delivery of care and innovation through</div>
<div class="c" style="left:1026px;top:467.42px;width:144px;height:18px;padding-right:2px;text-align:right;letter-spacing:-0.08px;">2005-12-14</div>
<div class="c" style="left:1171px;top:467.42px;width:215.4000000000001px;height:18px;padding-right:2px;text-align:right;letter-spacing:-0.27px;">10000000</div>
<div class="c" style="left:1840px;top:467.42px;width:51px;height:18px;padding-left:2px;letter-spacing:-0.230px;">Marcy Rosen</div>
<div class="c" style="left:265px;top:485.42px;width:369px;height:18px;padding-left:2px;letter-spacing:-0.230px;">Health Care</div>
<div class="c" style="left:635px;top:485.42px;width:390px;height:18px;padding-left:2px;letter-spacing:-0.230px;"> offers clinical management services and technologies to its clients</div>
<div class="c" style="left:1026px;top:485.42px;width:144px;height:18px;padding-right:2px;text-align:right;letter-spacing:-0.08px;">2011-12-23</div>
<div class="c" style="left:265px;top:503.42px;width:369px;height:18px;padding-left:2px;letter-spacing:-0.230px;">Health Care, Information Technology</div>
<div class="c" style="left:635px;top:503.42px;width:390px;height:18px;padding-left:2px;letter-spacing:-0.230px;">Community and tools for those who want to lose weight or follow</div>
<div class="c" style="left:1026px;top:503.42px;width:144px;height:18px;padding-right:2px;text-align:right;letter-spacing:-0.08px;">2017-01-01</div>
<div class="c" style="left:265px;top:521.42px;width:369px;height:18px;padding-left:2px;letter-spacing:-0.230px;">Health Care</div>
<div class="c" style="left:635px;top:521.42px;width:390px;height:18px;padding-left:2px;letter-spacing:-0.230px;">They are a new company but they have unparalleled experience</div>
<div class="c" style="left:1026px;top:521.42px;width:144px;height:18px;padding-right:2px;text-align:right;letter-spacing:-0.08px;">2013-11-04</div>
<div class="c" style="left:1840px;top:521.42px;width:51px;height:18px;padding-left:2px;letter-spacing:-0.230px;">Tom Mason</div>
<div class="c" style="left:265px;top:539.42px;width:369px;height:18px;padding-left:2px;letter-spacing:-0.230px;">Biometrics, Biotechnology, Health Care, Innovation Management</div>
<div class="c" style="left:635px;top:539.42px;width:390px;height:18px;padding-left:2px;letter-spacing:-0.230px;">develops and commercializes technologies in agrochemicals.</div>
<div class="c" style="left:1026px;top:539.42px;width:144px;height:18px;padding-right:2px;text-align:right;letter-spacing:-0.08px;">2009-08-01</div>
<div class="c" style="left:1171px;top:539.42px;width:215.4000000000001px;height:18px;padding-right:2px;text-align:right;letter-spacing:-0.27px;">535201</div>
<div class="c" style="left:265px;top:557.42px;width:369px;height:18px;padding-left:2px;letter-spacing:-0.230px;">Health Care</div>
<div class="c" style="left:635px;top:557.42px;width:390px;height:18px;padding-left:2px;letter-spacing:-0.230px;">pays customers out-of-pocket prescription costs automatically.</div>
<div class="c" style="left:1026px;top:557.42px;width:144px;height:18px;padding-right:2px;text-align:right;letter-spacing:-0.08px;">2008-01-01</div>
<div class="c" style="left:265px;top:575.42px;width:369px;height:18px;padding-left:2px;letter-spacing:-0.230px;">Health Care, Information Technology, Manufacturing, Medical</div>
<div class="c" style="left:635px;top:575.42px;width:390px;height:18px;padding-left:2px;letter-spacing:-0.230px;"> develops endoscopic products.</div>
<div class="c" style="left:1026px;top:575.42px;width:144px;height:18px;padding-right:2px;text-align:right;letter-spacing:-0.08px;">2006-12-13</div>
<div class="c" style="left:1171px;top:575.42px;width:215.4000000000001px;height:18px;padding-right:2px;text-align:right;letter-spacing:-0.27px;">4000000</div>
<div class="c" style="left:265px;top:593.42px;width:369px;height:18px;padding-left:2px;letter-spacing:-0.230px;">Health Care, Medical Device, Wellness</div>
<div class="c" style="left:635px;top:593.42px;width:390px;height:18px;padding-left:2px;letter-spacing:-0.230px;"> is developing a medical device designed to improve the lives </div>
<div class="c" style="left:1026px;top:593.42px;width:144px;height:18px;padding-right:2px;text-align:right;letter-spacing:-0.08px;">2020-02-25</div>
<div class="c" style="left:1171px;top:593.42px;width:215.4000000000001px;height:18px;padding-right:2px;text-align:right;letter-spacing:-0.27px;">31000000</div>
<div class="c" style="left:1840px;top:593.42px;width:51px;height:18px;padding-left:2px;letter-spacing:-0.230px;">John Scott</div>
<div class="c" style="left:265px;top:615.42px;width:369px;height:18px;padding-left:2px;letter-spacing:-0.230px;">Health Care, Information Technology, Medical</div>
<div class="c" style="left:635px;top:615.42px;width:390px;height:18px;padding-left:2px;letter-spacing:-0.230px;">The safest and friendliest e-prescribing tool, for doctors. The </div>
<div class="c" style="left:1026px;top:615.42px;width:144px;height:18px;padding-right:2px;text-align:right;letter-spacing:-0.08px;">2020-02-21</div>
<div class="c" style="left:1171px;top:615.42px;width:215.4000000000001px;height:18px;padding-right:2px;text-align:right;letter-spacing:-0.27px;">4556223</div>
<div class="c" style="left:1840px;top:615.42px;width:51px;height:18px;padding-left:2px;letter-spacing:-0.230px;">Marcel Rossi</div>
<div class="c" style="left:265px;top:637.42px;width:369px;height:18px;padding-left:2px;letter-spacing:-0.230px;">Biotechnology, Health Care, Therapeutics</div>
<div class="c" style="left:635px;top:637.42px;width:390px;height:18px;padding-left:2px;letter-spacing:-0.230px;"> is a biotechnology company in genome engineering. We develop</div>
<div class="c" style="left:1026px;top:637.42px;width:144px;height:18px;padding-right:2px;text-align:right;letter-spacing:-0.08px;">2016-05-16</div>
<div class="c" style="left:1171px;top:637.42px;width:215.4000000000001px;height:18px;padding-right:2px;text-align:right;letter-spacing:-0.27px;">30000000</div>
<div class="c" style="left:1840px;top:637.42px;width:51px;height:18px;padding-left:2px;letter-spacing:-0.230px;">James Burns</div>
<div class="c" style="left:265px;top:659.42px;width:369px;height:18px;padding-left:2px;letter-spacing:-0.230px;">Health Care, Medical</div>
<div class="c" style="left:635px;top:659.42px;width:390px;height:18px;padding-left:2px;letter-spacing:-0.230px;"> is pioneering a high-performance handheld ultrasound platform</div>
<div class="c" style="left:1026px;top:659.42px;width:144px;height:18px;padding-right:2px;text-align:right;letter-spacing:-0.08px;">2019-08-05</div>
<div class="c" style="left:1171px;top:659.42px;width:215.4000000000001px;height:18px;padding-right:2px;text-align:right;letter-spacing:-0.27px;">35000000</div>
<div class="c" style="left:1840px;top:659.42px;width:51px;height:18px;padding-left:2px;letter-spacing:-0.230px;">Janusz Bryzek</div>
<div class="c" style="left:265px;top:681.42px;width:369px;height:18px;padding-left:2px;letter-spacing:-0.230px;">Delivery Service, Health Care, Medical, Medical Device</div>
<div class="c" style="left:635px;top:681.42px;width:390px;height:18px;padding-left:2px;letter-spacing:-0.230px;"> is a  B2B2C platform  that  provides end-to-end prescription management</div>
<div class="c" style="left:1026px;top:681.42px;width:144px;height:18px;padding-right:2px;text-align:right;letter-spacing:-0.08px;">2019-05-15</div>
<div class="c" style="left:1171px;top:681.42px;width:215.4000000000001px;height:18px;padding-right:2px;text-align:right;letter-spacing:-0.27px;">25000000</div>
<div class="c" style="left:1840px;top:681.42px;width:51px;height:18px;padding-left:2px;letter-spacing:-0.230px;">Deepak Kumar</div>
<div class="c" style="left:265px;top:703.42px;width:369px;height:18px;padding-left:2px;letter-spacing:-0.230px;">Health Care, Hospital</div>
<div class="c" style="left:635px;top:703.42px;width:390px;height:18px;padding-left:2px;letter-spacing:-0.230px;"> is Health tech startup which has created a digital pen and coding</div>
<div class="c" style="left:1026px;top:703.42px;width:144px;height:18px;padding-right:2px;text-align:right;letter-spacing:-0.08px;">2019-08-14</div>
<div class="c" style="left:1171px;top:703.42px;width:215.4000000000001px;height:18px;padding-right:2px;text-align:right;letter-spacing:-0.27px;">4000000</div>
<div class="c" style="left:1840px;top:703.42px;width:51px;height:18px;padding-left:2px;letter-spacing:-0.230px;">Pawan Jain</div>
<div class="c" style="left:265px;top:725.42px;width:369px;height:18px;padding-left:2px;letter-spacing:-0.230px;">Health Care, Information Technology, Medical, SaaS</div>
<div class="c" style="left:635px;top:725.42px;width:390px;height:18px;padding-left:2px;letter-spacing:-0.230px;"> is an NCQA certified credentialing and provider data management</div>
<div class="c" style="left:1026px;top:725.42px;width:144px;height:18px;padding-right:2px;text-align:right;letter-spacing:-0.08px;">2019-06-12</div>
<div class="c" style="left:1171px;top:725.42px;width:215.4000000000001px;height:18px;padding-right:2px;text-align:right;letter-spacing:-0.27px;">14000000</div>
<div class="c" style="left:1840px;top:725.42px;width:51px;height:18px;padding-left:2px;letter-spacing:-0.230px;">Mike Simmons</div>
<div class="c" style="left:265px;top:747.42px;width:369px;height:18px;padding-left:2px;letter-spacing:-0.230px;">Artificial Intelligence, Big Data, Data Visualization, Health Care</div>
<div class="c" style="left:635px;top:747.42px;width:390px;height:18px;padding-left:2px;letter-spacing:-0.230px;"> provides AI-powered predictive analytics for managing healthcare</div>
<div class="c" style="left:1026px;top:747.42px;width:144px;height:18px;padding-right:2px;text-align:right;letter-spacing:-0.08px;">2018-07-10</div>
<div class="c" style="left:1171px;top:747.42px;width:215.4000000000001px;height:18px;padding-right:2px;text-align:right;letter-spacing:-0.27px;">11000000</div>
<div class="c" style="left:1840px;top:747.42px;width:51px;height:18px;padding-left:2px;letter-spacing:-0.230px;">Ash Damle</div>
<div class="c" style="left:265px;top:769.42px;width:369px;height:18px;padding-left:2px;letter-spacing:-0.230px;">Agriculture, Consumer Goods, E-Commerce, Food and Beverage</div>
<div class="c" style="left:635px;top:769.42px;width:390px;height:18px;padding-left:2px;letter-spacing:-0.230px;"> is a direct-to-consumer brand of fresh, healthy packaged foods</div>
<div class="c" style="left:1026px;top:769.42px;width:144px;height:18px;padding-right:2px;text-align:right;letter-spacing:-0.08px;">2018-03-22</div>
<div class="c" style="left:1171px;top:769.42px;width:215.4000000000001px;height:18px;padding-right:2px;text-align:right;letter-spacing:-0.27px;">22000000</div>
<div class="c" style="left:1840px;top:769.42px;width:51px;height:18px;padding-left:2px;letter-spacing:-0.230px;">Benjamin Lewis</div>
<div class="c" style="left:265px;top:791.42px;width:369px;height:18px;padding-left:2px;letter-spacing:-0.230px;">Food and Beverage, Health Care, Medical Device, Personal Health</div>
<div class="c" style="left:635px;top:791.42px;width:390px;height:18px;padding-left:2px;letter-spacing:-0.230px;"> is a science-driven company creating connected food sensors</div>
<div class="c" style="left:1026px;top:791.42px;width:144px;height:18px;padding-right:2px;text-align:right;letter-spacing:-0.08px;">2016-05-19</div>
<div class="c" style="left:1171px;top:791.42px;width:215.4000000000001px;height:18px;padding-right:2px;text-align:right;letter-spacing:-0.27px;">9200000</div>
<div class="c" style="left:1840px;top:791.42px;width:51px;height:18px;padding-left:2px;letter-spacing:-0.230px;">Scott Sundvor</div>
<div class="c" style="left:265px;top:813.42px;width:369px;height:18px;padding-left:2px;letter-spacing:-0.230px;">Artificial Intelligence, Health Care, Health Diagnostics, Medical</div>
<div class="c" style="left:635px;top:813.42px;width:390px;height:18px;padding-left:2px;letter-spacing:-0.230px;"> provides automated medical image analysis services and diagnostics</div>
<div class="c" style="left:1026px;top:813.42px;width:144px;height:18px;padding-right:2px;text-align:right;letter-spacing:-0.08px;">2018-12-18</div>
<div class="c" style="left:1171px;top:813.42px;width:215.4000000000001px;height:18px;padding-right:2px;text-align:right;letter-spacing:-0.27px;">50000000</div>
<div class="c" style="left:1840px;top:813.42px;width:51px;height:18px;padding-left:2px;letter-spacing:-0.230px;">Demetrios</div>
<div class="c" style="left:265px;top:835.42px;width:369px;height:18px;padding-left:2px;letter-spacing:-0.230px;">Genetics, Health Care, Life Science, Medical</div>
<div class="c" style="left:635px;top:835.42px;width:390px;height:18px;padding-left:2px;letter-spacing:-0.230px;">is an early-stage company using telemedicine to integrate genetics</div>
<div class="c" style="left:1026px;top:835.42px;width:144px;height:18px;padding-right:2px;text-align:right;letter-spacing:-0.08px;">2019-06-11</div>
<div class="c" style="left:1171px;top:835.42px;width:215.4000000000001px;height:18px;padding-right:2px;text-align:right;letter-spacing:-0.27px;">23000000</div>
<div class="c" style="left:1840px;top:835.42px;width:51px;height:18px;padding-left:2px;letter-spacing:-0.230px;">Lisa Alderson</div>
<div class="c" style="left:265px;top:857.42px;width:369px;height:18px;padding-left:2px;letter-spacing:-0.230px;">Biotechnology, Health Care, Medical, Medical Device</div>
<div class="c" style="left:635px;top:857.42px;width:390px;height:18px;padding-left:2px;letter-spacing:-0.230px;"> is a company dedicated to incorporating earlier cancer detection</div>
<div class="c" style="left:1026px;top:857.42px;width:144px;height:18px;padding-right:2px;text-align:right;letter-spacing:-0.08px;">2019-05-30</div>
<div class="c" style="left:1171px;top:857.42px;width:215.4000000000001px;height:18px;padding-right:2px;text-align:right;letter-spacing:-0.27px;">110000000</div>
<div class="c" style="left:1840px;top:857.42px;width:51px;height:18px;padding-left:2px;letter-spacing:-0.230px;">Bert Vogelstein</div>
<div class="c" style="left:265px;top:879.42px;width:369px;height:18px;padding-left:2px;letter-spacing:-0.230px;">Financial Services, Health Care</div>
<div class="c" style="left:1026px;top:879.42px;width:144px;height:18px;padding-right:2px;text-align:right;letter-spacing:-0.08px;">2019-10-16</div>
<div class="c" style="left:1171px;top:879.42px;width:215.4000000000001px;height:18px;padding-right:2px;text-align:right;letter-spacing:-0.27px;">27000000</div>
<div class="c" style="left:1840px;top:879.42px;width:51px;height:18px;padding-left:2px;letter-spacing:-0.230px;">Alex Cyriac</div>
<div class="c" style="left:265px;top:901.42px;width:369px;height:18px;padding-left:2px;letter-spacing:-0.230px;">Health Care, Personal Health, Wellness</div>
<div class="c" style="left:635px;top:901.42px;width:390px;height:18px;padding-left:2px;letter-spacing:-0.230px;">offers a personalized at-home finger-prick blood test which enables</div>
<div class="c" style="left:1026px;top:901.42px;width:144px;height:18px;padding-right:2px;text-align:right;letter-spacing:-0.08px;">2019-07-29</div>
<div class="c" style="left:1171px;top:901.42px;width:215.4000000000001px;height:18px;padding-right:2px;text-align:right;letter-spacing:-0.27px;">7329587</div>
<div class="c" style="left:1840px;top:901.42px;width:51px;height:18px;padding-left:2px;letter-spacing:-0.230px;">Eliot Brooks</div>
<div class="c" style="left:265px;top:923.42px;width:369px;height:18px;padding-left:2px;letter-spacing:-0.230px;">Consumer Goods, Health Care, Wellness</div>
<div class="c" style="left:635px;top:923.42px;width:390px;height:18px;padding-left:2px;letter-spacing:-0.230px;"> skincare that works, with independent clinical trial results to prove</div>
<div class="c" style="left:1026px;top:923.42px;width:144px;height:18px;padding-right:2px;text-align:right;letter-spacing:-0.08px;">2018-03-09</div>
<div class="c" style="left:1171px;top:923.42px;width:215.4000000000001px;height:18px;padding-right:2px;text-align:right;letter-spacing:-0.27px;">14073532</div>
<div class="c" style="left:1840px;top:923.42px;width:51px;height:18px;padding-left:2px;letter-spacing:-0.230px;">Hillary Peterson</div>
<div class="c" style="left:265px;top:945.42px;width:369px;height:18px;padding-left:2px;letter-spacing:-0.230px;">Health Care, Medical, Medical Device</div>
<div class="c" style="left:635px;top:945.42px;width:390px;height:18px;padding-left:2px;letter-spacing:-0.230px;">Continuum of Care is a concept involving a system that guides</div>
<div class="c" style="left:1026px;top:945.42px;width:144px;height:18px;padding-right:2px;text-align:right;letter-spacing:-0.08px;">2011-01-01</div>
<div class="b" style="left:1891px;top:351px;width:26px;height:649px;background:#e6e6e6;"></div>
<div class="b" style="left:1891px;top:368px;width:1px;height:607px;background:#8c8c8c;"></div>
<div class="b" style="left:1895px;top:372px;width:19px;height:583px;background:#d9d9d9;"></div>
<div class="b" style="left:1895px;top:353px;width:19px;height:19px;background:#fff;border:1.200px solid #7a7a7a;"></div>
<svg class="b" style="left:1899px;top:358px;" width="11" height="7" viewBox="0 0 11 7" fill="none"><path d="M.800 6h9.400l-4.700-5z" fill="#6f6f6f"/></svg>
<div class="b" style="left:1895px;top:933px;width:19px;height:21px;background:#fff;border:1.200px solid #7a7a7a;"></div>
<div class="b" style="left:1895px;top:955px;width:19px;height:19px;background:#fff;border:1.200px solid #7a7a7a;"></div>
<svg class="b" style="left:1899px;top:962px;" width="11" height="7" viewBox="0 0 11 7" fill="none"><path d="M.800 1h9.400l-4.700 5z" fill="#6f6f6f"/></svg>
<div class="b" style="left:0px;top:975px;width:1917px;height:25px;background:#e6e6e6;"></div>
<div class="b" style="left:0px;top:974px;width:101px;height:1px;background:#8c8c8c;"></div>
<div class="b" style="left:377px;top:974px;width:1515px;height:1px;background:#8c8c8c;"></div>
<div class="b" style="left:100px;top:974px;width:278px;height:26px;background:#fff;border-left:1px solid #8c8c8c;border-right:1px solid #8c8c8c;border-bottom:2px solid #217346;"></div>
<div class="t" style="left:111.70px;top:976.46px;font-size:16px;line-height:20px;color:#1e6b41;font-weight:bold;letter-spacing:0.218px;">Life Sciences Startups Overview</div>
<svg class="b" style="left:24px;top:982px;" width="8" height="12" viewBox="0 0 8 12" fill="none"><path d="M6.500 1v10l-5.500-5z" fill="#c6c6c6"/></svg>
<svg class="b" style="left:52px;top:982px;" width="8" height="12" viewBox="0 0 8 12" fill="none"><path d="M1.500 1v10l5.500-5z" fill="#c6c6c6"/></svg>
<svg class="b" style="left:410px;top:978px;" width="22" height="22" viewBox="0 0 22 22" fill="none"><circle cx="11" cy="11" r="9" stroke="#6b6b6b" stroke-width="1.200"/><path d="M11 5.500v11M5.500 11h11" stroke="#6b6b6b" stroke-width="1.500"/></svg>
<div class="b" style="left:1146px;top:981px;width:2px;height:3px;background:#b0b0b0;"></div>
<div class="b" style="left:1146px;top:987px;width:2px;height:3px;background:#b0b0b0;"></div>
<div class="b" style="left:1146px;top:993px;width:2px;height:3px;background:#b0b0b0;"></div>
<div class="b" style="left:1183px;top:979px;width:687px;height:19px;background:#d9d9d9;"></div>
<div class="b" style="left:1164px;top:979px;width:20px;height:19px;background:#fff;border:1.200px solid #7a7a7a;"></div>
<svg class="b" style="left:1170px;top:984px;" width="6" height="10" viewBox="0 0 6 10" fill="none"><path d="M5.500 .500v9l-5-4.500z" fill="#6f6f6f"/></svg>
<div class="b" style="left:1183px;top:979px;width:476px;height:19px;background:#fff;border:1.200px solid #7a7a7a;"></div>
<div class="b" style="left:1870px;top:979px;width:19px;height:19px;background:#fff;border:1.200px solid #7a7a7a;"></div>
<svg class="b" style="left:1877px;top:984px;" width="6" height="10" viewBox="0 0 6 10" fill="none"><path d="M.500 .500v9l5-4.500z" fill="#6f6f6f"/></svg>
</body></html>
